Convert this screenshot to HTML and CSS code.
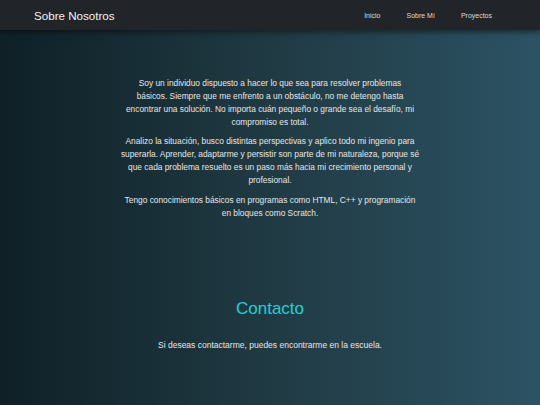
FILE: index.html
```html
<!DOCTYPE html>
<html lang="es">
<head>
<meta charset="utf-8">
<title>Sobre Nosotros</title>
<link rel="stylesheet" href="styles.css">
</head>
<body>
<header class="navbar">
  <div class="brand">Sobre Nosotros</div>
  <nav class="links">
    <a href="#">Inicio</a>
    <a href="#">Sobre Mí</a>
    <a href="#">Proyectos</a>
  </nav>
</header>
<main class="content">
  <section class="about">
    <p>Soy un individuo dispuesto a hacer lo que sea para resolver problemas<br>básicos. Siempre que me enfrento a un obstáculo, no me detengo hasta<br>encontrar una solución. No importa cuán pequeño o grande sea el desafío, mi<br>compromiso es total.</p>
    <p>Analizo la situación, busco distintas perspectivas y aplico todo mi ingenio para<br>superarla. Aprender, adaptarme y persistir son parte de mi naturaleza, porque sé<br>que cada problema resuelto es un paso más hacia mi crecimiento personal y<br>profesional.</p>
    <p>Tengo conocimientos básicos en programas como HTML, C++ y programación<br>en bloques como Scratch.</p>
  </section>
  <section class="contact">
    <h2>Contacto</h2>
    <p>Si deseas contactarme, puedes encontrarme en la escuela.</p>
  </section>
</main>
</body>
</html>
```
FILE: styles.css
```css
html, body {
  margin: 0;
  padding: 0;
}
body {
  min-height: 405px;
  background: linear-gradient(to right, #0f2027, #203a43, #2c5364);
  font-family: "Liberation Sans", Arial, sans-serif;
  color: #e6e6e6;
}
.navbar {
  height: 30px;
  background: #212529;
  display: flex;
  align-items: center;
  justify-content: space-between;
  padding: 0 35px 0 34px;
  box-shadow: 0 2px 6px rgba(0,0,0,0.5);
}
.brand {
  font-size: 11.6px;
  color: #f2f2f2;
}
.links {
  display: flex;
}
.links a {
  color: #dcdcdc;
  text-decoration: none;
  font-size: 7px;
  padding: 0 13px;
}
.content {
  display: flex;
  flex-direction: column;
  align-items: center;
}
.about {
  width: 330px;
  margin-top: 46.5px;
  text-align: center;
  font-size: 8.35px;
  line-height: 13px;
  white-space: nowrap;
}
.about p {
  margin: 0 0 6.5px;
}
.contact {
  margin-top: 71.5px;
  text-align: center;
}
.contact h2 {
  margin: 0;
  font-weight: normal;
  font-size: 17px;
  color: #22cfd6;
  line-height: 22px;
}
.contact p {
  margin: 19px 0 0;
  font-size: 8.5px;
  line-height: 13px;
}
```
